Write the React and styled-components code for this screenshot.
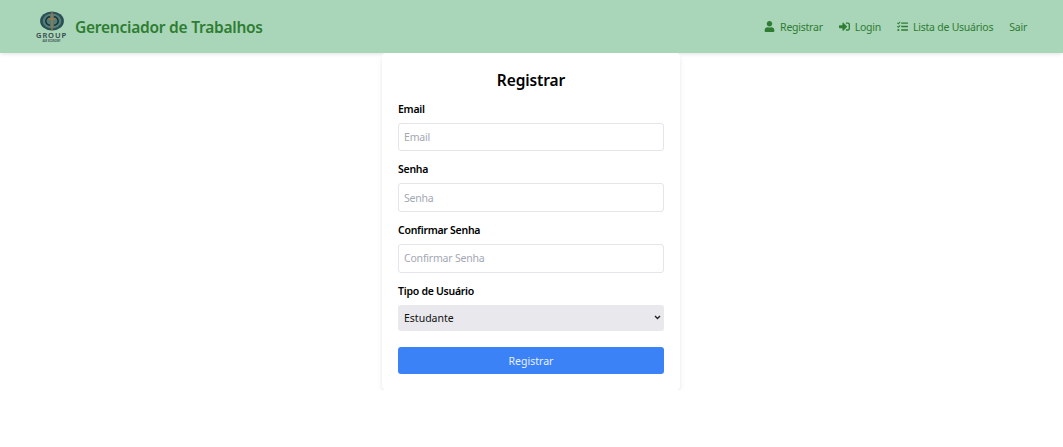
import React from "react";
import styled, { createGlobalStyle } from "styled-components";
import { FaUser, FaSignInAlt, FaTasks } from "react-icons/fa";

const Global = createGlobalStyle`
  html, body { margin: 0; padding: 0; background: #fff; }
  body { font-family: "Noto Sans", sans-serif; color: #000; }
  * { box-sizing: border-box; }
  input::placeholder { color: #a3a8b3; opacity: 1; }
`;

const Header = styled.header`
  height: 53px;
  background: #a9d5b9;
  box-shadow: 0 2px 4px -1px rgba(0,0,0,.12);
  display: flex;
  align-items: center;
  justify-content: space-between;
  padding: 0 36px;
  position: relative;
`;
const Brand = styled.div`
  display: flex;
  align-items: center;
  gap: 8px;
`;
const Logo = styled.div`
  width: 31px;
  display: flex;
  flex-direction: column;
  align-items: center;
  gap: 1px;
  line-height: 1;
`;
const LogoWord = styled.span`
  font-size: 7.5px;
  line-height: 7px;
  font-weight: 600;
  letter-spacing: .9px;
  color: #33484a;
`;
const LogoTag = styled.span`
  font-size: 2.5px;
  line-height: 2px;
  font-weight: 600;
  color: #33484a;
`;
const Title = styled.h1`
  margin: 0;
  font-size: 15.5px;
  font-weight: 600;
  letter-spacing: -.24px;
  color: #2e7d32;
`;
const Nav = styled.nav`
  display: flex;
  align-items: center;
  gap: 16px;
`;
const NavLink = styled.a`
  display: flex;
  align-items: center;
  gap: 5px;
  font-size: 10.5px;
  letter-spacing: -.24px;
  color: #2e7d32;
  svg { font-size: 11px; }
`;
const Main = styled.main`
  padding-right: 1px;
`;
const Card = styled.form`
  width: 298px;
  margin: 0 auto;
  padding: 16px;
  background: #fff;
  border-radius: 4px;
  box-shadow: 0 4px 6px -1px rgba(0,0,0,.1), 0 2px 4px -2px rgba(0,0,0,.1);
  position: relative;
`;
const Heading = styled.h2`
  margin: 0 0 8.75px;
  font-size: 15.5px;
  font-weight: 600;
  letter-spacing: -.1px;
  line-height: 22px;
  text-align: center;
`;
const Field = styled.div`
  margin-bottom: ${p => p.$last ? 16 : 9.17}px;
`;
const Label = styled.label`
  display: block;
  font-size: 10.5px;
  font-weight: 600;
  letter-spacing: -.27px;
  line-height: 19px;
  margin-bottom: 4px;
`;
const Input = styled.input`
  display: block;
  width: 100%;
  height: 28.5px;
  padding: 0 5px;
  border: 1px solid #e3e5ea;
  border-radius: 3px;
  background: #fff;
  font-family: "Noto Sans", sans-serif;
  font-size: 10.5px;
  letter-spacing: -.2px;
`;
const Select = styled.select`
  display: block;
  width: 100%;
  height: 26px;
  padding: 0 6px;
  border: 0;
  border-radius: 3px;
  appearance: none;
  background: #e8e8ed url("data:image/svg+xml,%3Csvg xmlns='http://www.w3.org/2000/svg' width='7' height='5' viewBox='0 0 7 5'%3E%3Cpath d='M1 1l2.5 2.5L6 1' fill='none' stroke='%23222' stroke-width='1.4'/%3E%3C/svg%3E") no-repeat right 3px center;
  color: #111;
  font-family: "Noto Sans", sans-serif;
  font-size: 10.5px;
`;
const Submit = styled.button`
  display: block;
  width: 100%;
  height: 27px;
  padding: 1px 0 0;
  border: 0;
  border-radius: 3px;
  background: #3b82f6;
  color: #e8f0fe;
  font-family: "Noto Sans", sans-serif;
  font-size: 10.5px;
`;

const LogoMark = () => (
  <svg width="26" height="20" viewBox="0 0 26 21">
    <ellipse cx="13" cy="10.5" rx="12.5" ry="10" fill="#2a5055" />
    <ellipse cx="13" cy="10.5" rx="9.8" ry="7.8" fill="#a9d5b9" opacity=".35" />
    <path d="M11 6a4.5 4.5 0 1 0 0 9M15 6a4.5 4.5 0 1 1 0 9" fill="none" stroke="#16363a" strokeWidth="1.6" />
    <path d="M13 1v19M9 8.5h8" stroke="#b4763f" strokeWidth="1.1" />
  </svg>
);

export default function App() {
  return (
    <>
      <Global />
      <Header>
        <Brand>
          <Logo>
            <LogoMark />
            <LogoWord>GROUP</LogoWord>
            <LogoTag>AGE ECONOMY</LogoTag>
          </Logo>
          <Title>Gerenciador de Trabalhos</Title>
        </Brand>
        <Nav>
          <NavLink><FaUser />Registrar</NavLink>
          <NavLink><FaSignInAlt />Login</NavLink>
          <NavLink><FaTasks />Lista de Usuários</NavLink>
          <NavLink>Sair</NavLink>
        </Nav>
      </Header>
      <Main>
        <Card>
          <Heading>Registrar</Heading>
          <Field><Label>Email</Label><Input placeholder="Email" /></Field>
          <Field><Label>Senha</Label><Input placeholder="Senha" /></Field>
          <Field><Label>Confirmar Senha</Label><Input placeholder="Confirmar Senha" /></Field>
          <Field $last><Label>Tipo de Usuário</Label>
            <Select defaultValue="Estudante"><option>Estudante</option></Select>
          </Field>
          <Submit type="button">Registrar</Submit>
        </Card>
      </Main>
    </>
  );
}
